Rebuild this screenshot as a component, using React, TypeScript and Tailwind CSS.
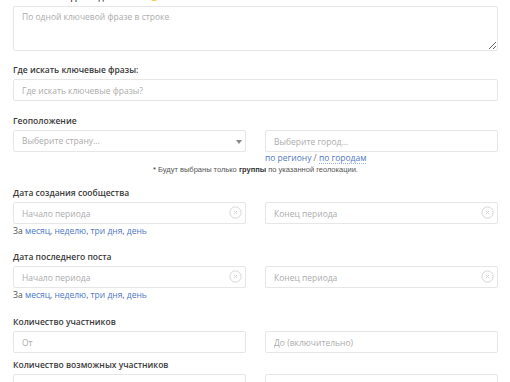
import { useState } from "react"

const inputCls =
  "block h-[22px] w-full rounded-[2px] border border-[#e6e6e6] bg-white px-[8px] text-[8.5px] text-[#444] outline-none placeholder:text-[#acacac]"

function Label({ children, className = "" }: { children: React.ReactNode; className?: string }) {
  return (
    <div className={`mb-[1px] h-[16px] text-[8.5px] font-semibold leading-[16px] text-[#3a3a3a] ${className}`}>
      {children}
    </div>
  )
}

function ClearIcon() {
  return (
    <svg className="absolute right-[4px] top-[4px]" width="13" height="13" viewBox="0 0 13 13" fill="none">
      <circle cx="6.5" cy="6.5" r="5.6" stroke="#d0d0d0" strokeWidth="0.9" />
      <path d="M4.8 4.8 8.2 8.2M8.2 4.8 4.8 8.2" stroke="#d0d0d0" strokeWidth="0.9" />
    </svg>
  )
}

function DateInput({ placeholder }: { placeholder: string }) {
  return (
    <div className="relative">
      <input className={inputCls} placeholder={placeholder} />
      <ClearIcon />
    </div>
  )
}

function Period() {
  return (
    <div className="h-[14px] text-[8.5px] leading-[14px] text-[#555]">
      За{" "}
      <a className="text-[#4f78c4]">месяц</a>, <a className="text-[#4f78c4]">неделю</a>,{" "}
      <a className="text-[#4f78c4]">три дня</a>, <a className="text-[#4f78c4]">день</a>
    </div>
  )
}

export default function App() {
  const [phrases, setPhrases] = useState("")

  return (
    <div className="h-[382px] overflow-hidden bg-white pl-[13px] pr-[12px] font-['Open_Sans',sans-serif]">
      <div className="w-[485px]">
        <div className="h-[6px] overflow-hidden">
          <div className="-mt-[11px] flex items-center gap-[4px] text-[8.5px] font-semibold leading-[16px] text-[#3a3a3a]">
            <span className="pl-[8px]">Ключевые фразы для поиска</span>
            <span className="inline-block h-[8px] w-[8px] rounded-full bg-[#f2c94c]" />
          </div>
        </div>

        <textarea
          value={phrases}
          onChange={(e) => setPhrases(e.target.value)}
          placeholder="По одной ключевой фразе в строке"
          className="block h-[45px] w-full resize-y rounded-[2px] border border-[#e6e6e6] bg-white px-[8px] pt-[4px] text-[8.5px] leading-[12px] text-[#444] outline-none placeholder:text-[#acacac]"
        />

        <Label className="mt-[11px]">Где искать ключевые фразы:</Label>
        <input className={inputCls} placeholder="Где искать ключевые фразы?" />

        <Label className="mt-[12px]">Геоположение</Label>
        <div className="grid grid-cols-2 gap-[19px]">
          <div className="relative">
            <div className={`${inputCls} flex items-center text-[#acacac]`}>Выберите страну...</div>
            <span className="absolute right-[4px] top-[10px] h-0 w-0 border-x-[3px] border-t-[4px] border-x-transparent border-t-[#888]" />
          </div>
          <div>
            <input className={inputCls} placeholder="Выберите город..." />
            <div className="h-[12px] text-[8.5px] leading-[12px] text-[#4f78c4]">
              по региону <span className="text-[#777]">/</span>{" "}
              <span className="border-b border-dotted border-[#9ab2de]">по городам</span>
            </div>
          </div>
        </div>
        <div className="h-[11px] text-center font-['Liberation_Sans',sans-serif] text-[7.5px] leading-[11px] text-[#555]">
          <span className="text-[#333]">*</span> Будут выбраны только{" "}
          <b className="font-bold text-[#333]">группы</b> по указанной геолокации.
        </div>

        <Label className="mt-[10px]">Дата создания сообщества</Label>
        <div className="grid grid-cols-2 gap-[19px]">
          <DateInput placeholder="Начало периода" />
          <DateInput placeholder="Конец периода" />
        </div>
        <Period />

        <Label className="mt-[11px]">Дата последнего поста</Label>
        <div className="grid grid-cols-2 gap-[19px]">
          <DateInput placeholder="Начало периода" />
          <DateInput placeholder="Конец периода" />
        </div>
        <Period />

        <Label className="mt-[12px]">Количество участников</Label>
        <div className="grid grid-cols-2 gap-[19px]">
          <input className={inputCls} placeholder="От" />
          <input className={inputCls} placeholder="До (включительно)" />
        </div>

        <Label className="mt-[4px]">Количество возможных участников</Label>
        <div className="grid grid-cols-2 gap-[19px]">
          <input className={inputCls} />
          <input className={inputCls} />
        </div>
      </div>
    </div>
  )
}
